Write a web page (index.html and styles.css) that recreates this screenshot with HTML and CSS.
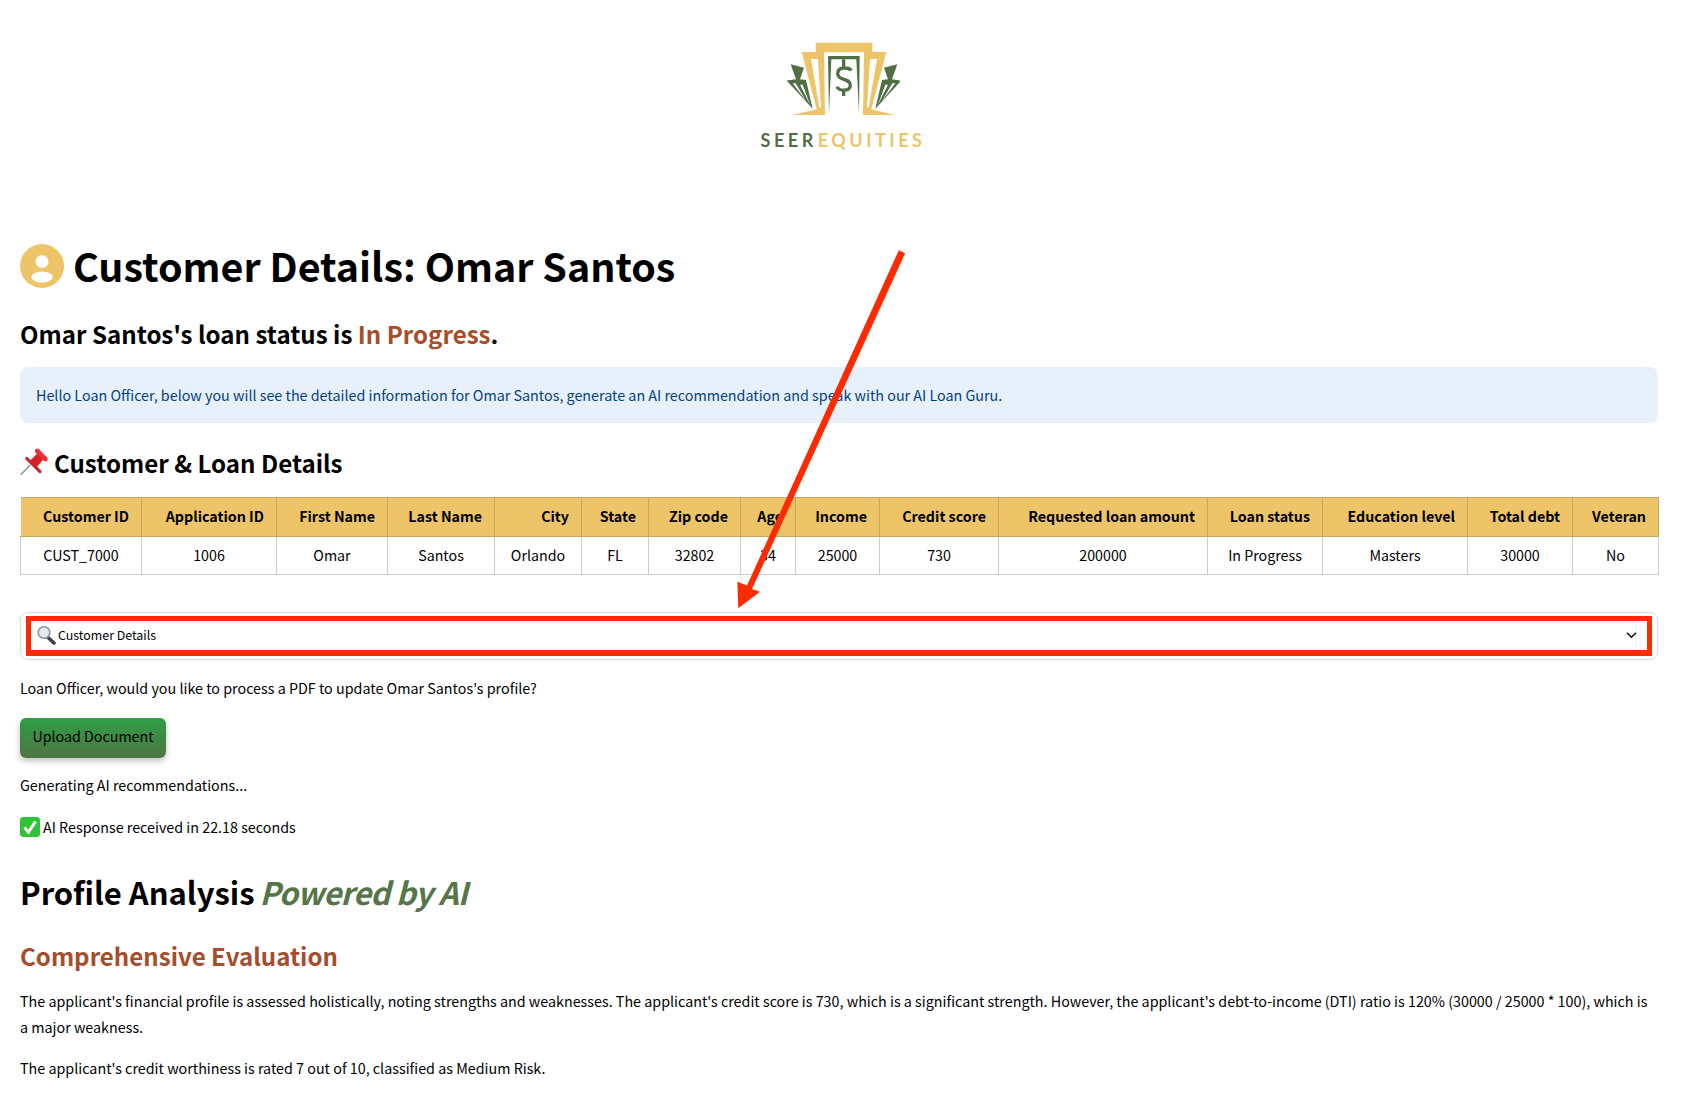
FILE: index.html
```html
<!DOCTYPE html>
<html lang="en">
<head>
<meta charset="utf-8">
<title>Customer Details: Omar Santos</title>
<link rel="stylesheet" href="styles.css">
</head>
<body>
<main class="page">
  <header class="logo">
    <svg class="logo-mark" viewBox="139 60 340 228" width="113.33" height="76" aria-hidden="true">
      <path class="gold" d="M225 68H395V96H437L392 268L462 285H367L370 97H250L253 285H155L228 268L183 96H225Z"/>
      <path class="white" d="M211 117H232L241 262H236ZM409 117H388L379 262H384Z"/>
      <path class="green" d="M150 133L190 143L178 178L196 180L216 266L138 182L166 178Z"/>
      <path class="green" d="M470 133L430 143L442 178L424 180L404 266L482 182L454 178Z"/>
      <path class="white" d="M178 194L186 194L209 256ZM156 190L165 190L196 243ZM442 194L434 194L411 256ZM464 190L455 190L424 243Z"/>
      <path class="green" d="M262 108H357L355 279L347 118H272L265 279Z"/>
      <path class="dollar" d="M331 152C327 142 292 138 291 160C290 184 329 172 329 196C329 216 293 214 289 200M309 118V140M309 212V228"/>
    </svg>
    <div class="logo-name"><span class="seer">SEER</span><span class="equities">EQUITIES</span></div>
  </header>

  <h1 class="title">
    <svg class="avatar" viewBox="0 0 44 44" width="44" height="44" aria-hidden="true">
      <circle cx="22" cy="22" r="22" fill="#edc468"/>
      <circle cx="22" cy="17.5" r="6.5" fill="#fff"/>
      <ellipse cx="22" cy="33" rx="10.7" ry="5.5" fill="#fff"/>
    </svg>
    <span>Customer Details: Omar Santos</span>
  </h1>

  <h2 class="status">Omar Santos's loan status is <span class="rust">In Progress</span>.</h2>

  <div class="info">Hello Loan Officer, below you will see the detailed information for Omar Santos, generate an AI recommendation and speak with our AI Loan Guru.</div>

  <h2 class="section">
    <svg class="pin" viewBox="0 0 90 90" width="30" height="30" aria-hidden="true">
      <path d="M3 79L30 52" stroke="#66798c" stroke-width="3.5" stroke-linecap="round"/>
      <path d="M20 31L60 71" stroke="#c9202b" stroke-width="9" stroke-linecap="round"/>
      <path d="M30 38L54 14L72 32L50 58Z" fill="#d8202c"/>
      <path d="M52 9L76 33" stroke="#e8323a" stroke-width="14" stroke-linecap="round"/>
    </svg>
    <span>Customer &amp; Loan Details</span>
  </h2>

  <table class="details">
    <colgroup>
      <col class="c1"><col class="c2"><col class="c3"><col class="c4"><col class="c5"><col class="c6"><col class="c7"><col class="c8"><col class="c9"><col class="c10"><col class="c11"><col class="c12"><col class="c13"><col class="c14"><col class="c15">
    </colgroup>
    <thead>
      <tr><th>Customer ID</th><th>Application ID</th><th>First Name</th><th>Last Name</th><th>City</th><th>State</th><th>Zip code</th><th>Age</th><th>Income</th><th>Credit score</th><th>Requested loan amount</th><th>Loan status</th><th>Education level</th><th>Total debt</th><th>Veteran</th></tr>
    </thead>
    <tbody>
      <tr><td>CUST_7000</td><td>1006</td><td>Omar</td><td>Santos</td><td>Orlando</td><td>FL</td><td>32802</td><td>34</td><td>25000</td><td>730</td><td>200000</td><td>In Progress</td><td>Masters</td><td>30000</td><td>No</td></tr>
    </tbody>
  </table>

  <div class="expander">
    <svg class="lens" viewBox="0 0 20 20" width="20" height="20" aria-hidden="true">
      <path d="M12 12.5L18 18" stroke="#3f3f3f" stroke-width="3.6" stroke-linecap="round"/>
      <circle cx="8" cy="7.5" r="5.8" fill="#e4ebef" stroke="#8d969b" stroke-width="1.6"/>
    </svg>
    <span class="expander-label">Customer Details</span>
    <svg class="chev" viewBox="0 0 12 8" width="11" height="8" aria-hidden="true">
      <path d="M1 1.5L6 6.5L11 1.5" fill="none" stroke="#111" stroke-width="1.6"/>
    </svg>
    <div class="frame"></div>
  </div>

  <p class="prompt">Loan Officer, would you like to process a PDF to update Omar Santos's profile?</p>
  <button class="upload" type="button">Upload Document</button>
  <p class="generating">Generating AI recommendations...</p>
  <p class="response">
    <svg class="check" viewBox="0 0 20 20" width="20" height="20" aria-hidden="true">
      <rect width="20" height="20" rx="3.5" fill="#2fc435"/>
      <path d="M4.5 10.5L8.5 15L15.5 4.5" fill="none" stroke="#fff" stroke-width="3"/>
    </svg>
    <span>AI Response received in 22.18 seconds</span>
  </p>

  <h2 class="profile">Profile Analysis <em class="moss">Powered by AI</em></h2>
  <h3 class="evaluation">Comprehensive Evaluation</h3>
  <p class="body-a">The applicant's financial profile is assessed holistically, noting strengths and weaknesses. The applicant's credit score is 730, which is a significant strength. However, the applicant's debt-to-income (DTI) ratio is 120% (30000 / 25000 * 100), which is a major weakness.</p>
  <p class="body-b">The applicant's credit worthiness is rated 7 out of 10, classified as Medium Risk.</p>

  <svg class="arrow" viewBox="0 0 1681 1094" width="1681" height="1094" aria-hidden="true">
    <path d="M905.2 253.2L898.8 250.2L747 585.5L737.3 581.7L738.3 608.3L760 591.7L752 589Z" fill="#ff2a00"/>
  </svg>
</main>
</body>
</html>
```

FILE: styles.css
```css
html, body {
  margin: 0;
  padding: 0;
  height: 1094px;
  overflow: hidden;
  background: #fff;
}

body {
  font-family: "Noto Sans CJK SC", "Noto Sans", sans-serif;
  color: #000;
  font-size: 14.32px;
}

.page {
  position: relative;
  width: 1638px;
  height: 1094px;
  padding: 20px 23px 0 20px;
  display: flex;
  flex-direction: column;
  overflow: hidden;
}

h1, h2, h3, p { margin: 0; }

.logo {
  height: 132px;
  display: flex;
  flex-direction: column;
  align-items: center;
  flex: none;
}

.logo-mark { margin: 20px 0 0 9px; }
.gold { fill: #edc468; }
.white { fill: #fff; }
.green { fill: #4f6f44; }
.dollar { fill: none; stroke: #4f6f44; stroke-width: 10; }

.logo-name {
  margin: 12px 0 0 8px;
  font-family: Lato, sans-serif;
  font-weight: 700;
  font-size: 18px;
  line-height: 24px;
  letter-spacing: 3.5px;
}
.seer { color: #4f6f44; }
.equities { color: #edc468; margin-left: 1px; }

.title {
  margin-top: 83px;
  height: 60px;
  display: flex;
  align-items: center;
  gap: 9px;
  font-size: 39.4px;
  line-height: 60px;
  font-weight: 700;
  flex: none;
}

.avatar { flex: none; margin-top: 2px; }

.status {
  margin-top: 19px;
  font-size: 24.1px;
  line-height: 40px;
  font-weight: 600;
}
.rust { color: #a64d2b; }

.info {
  margin-top: 13px;
  height: 56px;
  box-sizing: border-box;
  padding: 16px;
  background: #e8f0fb;
  color: #004280;
  border-radius: 8px;
  line-height: 24px;
}

.section {
  margin-top: 20px;
  height: 40px;
  display: flex;
  align-items: center;
  gap: 4px;
  font-size: 24.1px;
  line-height: 40px;
  font-weight: 600;
}

.pin { flex: none; }

.details {
  margin-top: 14px;
  width: 1638px;
  table-layout: fixed;
  border-collapse: collapse;
  font-size: 14.25px;
}

.c1 { width: 121px; }
.c2 { width: 135px; }
.c3 { width: 111px; }
.c4 { width: 107px; }
.c5 { width: 87px; }
.c6 { width: 67px; }
.c7 { width: 92px; }
.c8 { width: 55px; }
.c9 { width: 84px; }
.c10 { width: 119px; }
.c11 { width: 209px; }
.c12 { width: 115px; }
.c13 { width: 145px; }
.c14 { width: 105px; }
.c15 { width: 86px; }

.details th {
  height: 39px;
  box-sizing: border-box;
  padding: 0 12px 2px 4px;
  background: #edc468;
  border: 1px solid #c5a95f;
  border-left: 0;
  text-align: right;
  font-weight: 700;
  line-height: 20px;
}

.details td {
  height: 38px;
  box-sizing: border-box;
  padding: 0 4px 2px;
  border: 1px solid #ccc;
  text-align: center;
  line-height: 20px;
}

.expander {
  position: relative;
  margin-top: 37px;
  height: 48px;
  box-sizing: border-box;
  border: 1px solid #dcdcdc;
  border-radius: 8px;
  display: flex;
  align-items: center;
  padding: 0 20px 2px 15px;
  flex: none;
}

.lens { flex: none; }

.expander-label {
  margin-left: 2px;
  font-size: 12.4px;
  line-height: 20px;
  flex: 1;
}

.chev { flex: none; }

.frame {
  position: absolute;
  left: 5px;
  right: 5px;
  top: 3px;
  bottom: 3px;
  border-style: solid;
  border-color: #ff2a00;
  border-width: 5px 5px 6px;
}

.prompt {
  margin-top: 16px;
  line-height: 24px;
}

.upload {
  margin-top: 18px;
  width: 146px;
  height: 40px;
  padding: 0 0 4px;
  border: 0;
  border-radius: 6px;
  background: linear-gradient(180deg, #2e9e44 0%, #4f7545 100%);
  box-shadow: 0 3px 6px rgba(0, 0, 0, 0.25);
  font: inherit;
  font-size: 14.25px;
  color: #000;
  line-height: 24px;
  flex: none;
}

.generating {
  margin-top: 15px;
  line-height: 24px;
}

.response {
  margin-top: 18px;
  line-height: 24px;
  display: flex;
  align-items: center;
  gap: 3px;
}

.check { flex: none; }

.profile {
  margin-top: 28px;
  font-size: 31px;
  line-height: 50px;
  font-weight: 600;
}

.moss {
  margin-left: -2px;
  color: #567548;
  font-weight: 600;
  font-style: italic;
  letter-spacing: -0.66px;
}

.evaluation {
  margin-top: 19px;
  color: #a64d2b;
  font-size: 24.1px;
  line-height: 40px;
  font-weight: 600;
}

.body-a {
  margin-top: 12px;
  line-height: 25.6px;
}

.body-b {
  margin-top: 16px;
  line-height: 25.6px;
}

.arrow {
  position: absolute;
  left: 0;
  top: 0;
  pointer-events: none;
}
```
